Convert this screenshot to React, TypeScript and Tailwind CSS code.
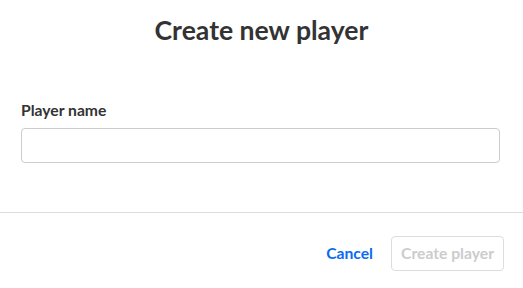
export default function App() {
  return (
    <div className="w-[523px] h-[288px] bg-white" style={{ fontFamily: "Lato, 'Open Sans', sans-serif" }}>
      <div className="pt-[12px] h-[213px] px-[21px] border-b border-[#dddddd]">
        <h1 className="text-center text-[26.6px] leading-[36px] font-bold text-[#333333]">Create new player</h1>
        <label className="block mt-[52px] text-[15.7px] leading-[20px] font-bold text-[#333333]">Player name</label>
        <input className="mt-[8px] block w-[479px] h-[35px] border border-[#cccccc] rounded-[4px] outline-none" />
      </div>
      <div className="flex justify-end items-center gap-[18px] pr-[19px] pt-[23px]">
        <button className="text-[15.7px] font-bold text-[#0a6cf0]">Cancel</button>
        <button className="h-[35px] px-[9px] border border-[#dddddd] rounded-[4px] text-[15.7px] font-bold text-[#cccccc]">Create player</button>
      </div>
    </div>
  );
}
